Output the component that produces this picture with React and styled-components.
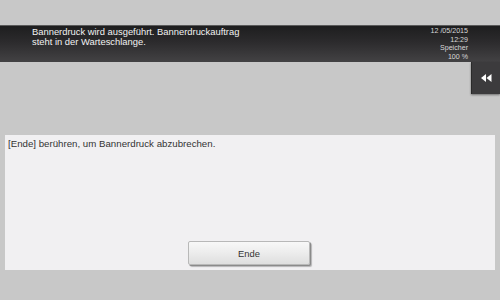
import React from "react";
import styled, { createGlobalStyle } from "styled-components";

const Global = createGlobalStyle`
  html, body { margin: 0; padding: 0; }
  body {
    width: 500px; height: 300px; overflow: hidden;
    background: #c8c8c8;
    font-family: "Liberation Sans", Arial, sans-serif;
  }
`;

const Screen = styled.div`
  width: 500px;
  height: 300px;
  display: flex;
  flex-direction: column;
  background: #c8c8c8;
`;

const TopSpacer = styled.div`
  height: 25px;
`;

const StatusBar = styled.div`
  height: 37px;
  display: flex;
  justify-content: space-between;
  align-items: flex-start;
  background: linear-gradient(180deg, #1e1e1f 0%, #2c2b2d 45%, #434244 100%);
  border-top: 1px solid #5a5a5a;
  box-sizing: border-box;
  padding: 1px 32px 0 32px;
`;

const Message = styled.div`
  color: #f2f2f2;
  font-size: 9.4px;
  line-height: 10px;
`;

const Info = styled.div`
  color: #d8d8d8;
  font-size: 7.1px;
  line-height: 8.7px;
  text-align: right;
  margin-top: 0px;
`;

const SideRow = styled.div`
  display: flex;
  justify-content: flex-end;
  height: 73px;
`;

const BackButton = styled.div`
  width: 28px;
  height: 32px;
  background: #3c3b3d;
  border-left: 1px solid #2a2a2a;
  box-shadow: 0 1px 2px rgba(0,0,0,0.45);
  display: flex;
  align-items: center;
  justify-content: center;
`;

const Panel = styled.div`
  margin: 0 5px;
  height: 135px;
  background: #f1f0f2;
  display: flex;
  flex-direction: column;
  box-sizing: border-box;
  padding: 3px 3px 5px 3px;
`;

const PanelText = styled.div`
  color: #333;
  font-size: 9.7px;
  line-height: 12px;
  flex: 1;
`;

const ButtonRow = styled.div`
  display: flex;
  justify-content: center;
  padding-right: 2px;
`;

const EndButton = styled.div`
  width: 122px;
  height: 24px;
  box-sizing: border-box;
  border: 1px solid #b8b8b8;
  border-radius: 2px;
  background: linear-gradient(180deg, #f8f8f8 0%, #ececec 50%, #dedede 100%);
  box-shadow: 1px 1px 0 #8a8a8a, 2px 2px 1px rgba(0,0,0,0.25);
  display: flex;
  align-items: center;
  justify-content: center;
  color: #333;
  font-size: 9.4px;
`;

export default function App() {
  return (
    <>
      <Global />
      <Screen>
        <TopSpacer />
        <StatusBar>
          <Message>
            Bannerdruck wird ausgeführt. Bannerdruckauftrag
            <br />
            steht in der Warteschlange.
          </Message>
          <Info>
            12 /05/2015
            <br />
            12:29
            <br />
            Speicher
            <br />
            100 %
          </Info>
        </StatusBar>
        <SideRow>
          <BackButton>
            <svg width="11" height="8" viewBox="0 0 11 8">
              <polygon points="5,0 5,8 0,4" fill="#fff" />
              <polygon points="10.5,0 10.5,8 5.5,4" fill="#fff" />
            </svg>
          </BackButton>
        </SideRow>
        <Panel>
          <PanelText>[Ende] berühren, um Bannerdruck abzubrechen.</PanelText>
          <ButtonRow>
            <EndButton>Ende</EndButton>
          </ButtonRow>
        </Panel>
      </Screen>
    </>
  );
}
